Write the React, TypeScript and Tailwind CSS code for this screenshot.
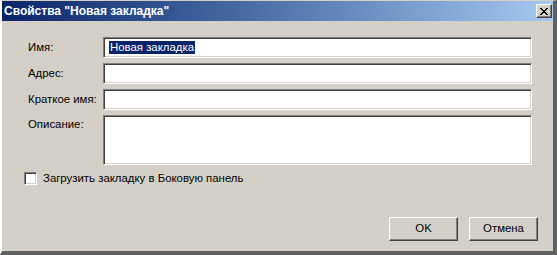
const FIELDS = [
  { label: "Имя:", value: "Новая закладка", selected: true },
  { label: "Адрес:", value: "" },
  { label: "Краткое имя:", value: "" },
];

const sunken =
  "border border-t-[#808080] border-l-[#808080] border-b-white border-r-white shadow-[inset_1px_1px_0_#404040,inset_-1px_-1px_0_#d4d0c8] bg-white";

const raised =
  "border border-t-white border-l-white border-b-[#404040] border-r-[#404040] shadow-[inset_-1px_-1px_0_#808080] bg-[#d4d0c8]";

export default function App() {
  return (
    <div
      className="w-[557px] h-[255px] bg-[#d4d0c8] flex flex-col overflow-hidden text-[11.4px] text-black border-t border-l-2 border-t-[#d4d0c8] border-l-white border-r-4 border-b-4 border-r-[#606060] border-b-[#606060]"
      style={{ fontFamily: '"Liberation Sans", Arial, sans-serif' }}
    >
      {/* Title bar */}
      <div className="h-[20px] flex items-center justify-between pl-[2px] pr-[1px] bg-linear-to-r from-[#0a246a] to-[#a6caf0]">
        <span className="text-white font-bold text-[12px] leading-none">Свойства "Новая закладка"</span>
        <button className={`w-[16px] h-[14px] flex items-center justify-center ${raised}`}>
          <svg width="8" height="7" viewBox="0 0 8 7" shapeRendering="crispEdges">
            <path d="M0 0h2v1h1v1h2V1h1V0h2v1H7v1H6v1H5v1h1v1h1v1h1v1H6V6H5V5H3v1H2v1H0V6h1V5h1V4h1V3H2V2H1V1H0z" fill="#000" />
          </svg>
        </button>
      </div>

      <div className="flex-1 flex flex-col pt-[16px] pl-[22px] pb-[10px]">
        <div className="flex flex-col gap-[5px] pr-[21px]">
          {FIELDS.map((f) => (
            <div key={f.label} className="flex items-center">
              <span className="w-[79px] pl-[4px]">{f.label}</span>
              <div className={`flex-1 h-[21px] flex items-center pl-[5px] ${sunken}`}>
                {f.selected && (
                  <span className="bg-[#0a246a] text-white leading-[13px] px-[1px]">{f.value}</span>
                )}
              </div>
            </div>
          ))}
          <div className="flex items-start">
            <span className="w-[79px] pl-[4px] pt-[1px]">Описание:</span>
            <div className={`flex-1 h-[50px] ${sunken}`} />
          </div>
        </div>

        <label className="flex items-center gap-[6px] mt-[5px]">
          <span className={`w-[13px] h-[13px] ${sunken}`} />
          <span>Загрузить закладку в Боковую панель</span>
        </label>

        <div className="mt-auto flex justify-end gap-[11px] pr-[15px]">
          <button className={`w-[69px] h-[24px] ${raised}`}>OK</button>
          <button className={`w-[69px] h-[24px] ${raised}`}>Отмена</button>
        </div>
      </div>
    </div>
  );
}
